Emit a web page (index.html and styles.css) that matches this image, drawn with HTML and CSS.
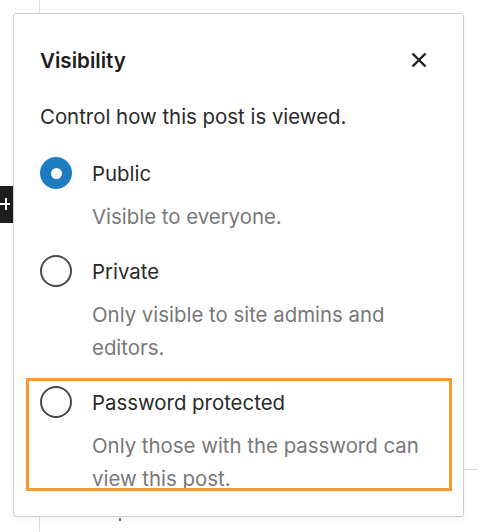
FILE: index.html
```html
<!DOCTYPE html>
<html lang="en">
<head>
  <meta charset="UTF-8" />
  <meta name="viewport" content="width=device-width, initial-scale=1.0"/>
  <title>Visibility</title>
  <link rel="stylesheet" href="styles.css">
</head>
<body>
  <div class="canvas">
    <span class="guide"></span>
    <span class="inserter"></span>
    <span class="rule"></span>
    <span class="speck"></span>

    <div class="popover">
      <div class="popover-header">
        <h2>Visibility</h2>
        <button class="close" aria-label="Close">
          <svg width="16" height="16" viewBox="0 0 16 16">
            <path d="M1.5 1.5 L14.5 14.5 M14.5 1.5 L1.5 14.5" stroke="#1e1e1e" stroke-width="2.4" fill="none"/>
          </svg>
        </button>
      </div>
      <p class="intro">Control how this post is viewed.</p>

      <div class="options">
        <div class="option">
          <div class="option-row">
            <span class="radio checked"></span>
            <span class="label">Public</span>
          </div>
          <p class="desc">Visible to everyone.</p>
        </div>
        <div class="option">
          <div class="option-row">
            <span class="radio"></span>
            <span class="label">Private</span>
          </div>
          <p class="desc">Only visible to site admins and editors.</p>
        </div>
        <div class="option">
          <div class="option-row">
            <span class="radio"></span>
            <span class="label">Password protected</span>
          </div>
          <p class="desc">Only those with the password can view this post.</p>
        </div>
      </div>

      <div class="highlight"></div>
    </div>
  </div>
</body>
</html>
```

FILE: styles.css
```css
* { margin: 0; padding: 0; box-sizing: border-box; }
html, body {
  background: #fff;
  font-family: Inter, "Noto Sans", sans-serif;
  color: #1e1e1e;
}
.canvas {
  position: relative;
  width: 486px;
  height: 532px;
  overflow: hidden;
  padding: 13px 0 0 13px;
}
.guide {
  position: absolute;
  left: 39px;
  top: 0;
  width: 1px;
  height: 532px;
  background: #dedede;
}
.inserter {
  position: absolute;
  left: 0;
  top: 186px;
  width: 13px;
  height: 37px;
  background: #1e1e1e;
}
.inserter::before, .inserter::after {
  content: "";
  position: absolute;
  background: #fff;
}
.inserter::before { left: 0; top: 17px; width: 10px; height: 2px; }
.inserter::after { left: 5px; top: 12px; width: 2px; height: 12px; }
.rule {
  position: absolute;
  left: 464px;
  top: 469px;
  width: 14px;
  height: 1px;
  background: #dedede;
}
.speck {
  position: absolute;
  left: 119px;
  top: 518px;
  width: 2px;
  height: 3px;
  background: #777;
}
.popover {
  position: relative;
  width: 451px;
  height: 504px;
  background: #fff;
  border: 1px solid #cfcfcf;
  border-radius: 3px;
  box-shadow: 0 2px 6px rgba(0,0,0,0.05);
  padding: 24px 26px 22px;
}
.popover-header {
  display: flex;
  align-items: center;
  justify-content: space-between;
  height: 44px;
}
.popover-header h2 {
  font-size: 20.6px;
  font-weight: 600;
}
.close {
  width: 36px;
  height: 36px;
  border: none;
  background: none;
  display: flex;
  align-items: center;
  justify-content: center;
}
.intro {
  margin-top: 21px;
  font-size: 20.4px;
  line-height: 28px;
  color: #2a2a2a;
}
.options {
  margin-top: 26px;
  display: flex;
  flex-direction: column;
  gap: 22px;
}
.option-row {
  display: flex;
  align-items: center;
  gap: 20px;
  height: 32px;
}
.radio {
  width: 32px;
  height: 32px;
  border-radius: 50%;
  border: 2px solid #4a4a4a;
  flex-shrink: 0;
}
.radio.checked {
  border: none;
  background: #1d7cbf;
  display: flex;
  align-items: center;
  justify-content: center;
}
.radio.checked::before {
  content: "";
  width: 11px;
  height: 11px;
  border-radius: 50%;
  background: #fff;
}
.label {
  font-size: 20.4px;
  color: #2a2a2a;
}
.desc {
  margin-top: 11px;
  padding-left: 52px;
  font-size: 20.4px;
  line-height: 33px;
  color: #787878;
}
.highlight {
  position: absolute;
  left: 12px;
  top: 364px;
  width: 426px;
  height: 113px;
  border: 3px solid #f89a30;
  pointer-events: none;
}
```
